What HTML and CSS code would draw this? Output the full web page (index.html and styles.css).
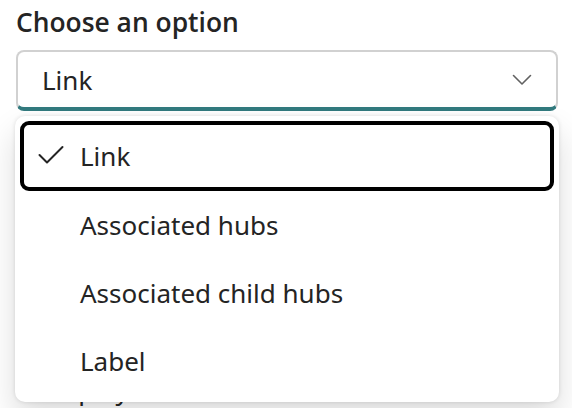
FILE: index.html
```html
<!DOCTYPE html>
<html>
<head>
<meta charset="utf-8">
<link rel="stylesheet" href="styles.css">
</head>
<body>
<div class="field">
  <label class="label">Choose an option</label>
  <div class="combo">
    <div class="dropdown">
      <span class="value">Link</span>
      <svg class="chevron" width="20" height="12" viewBox="0 0 20 12"><path d="M1.5 1.5 L10 10 L18.5 1.5" fill="none" stroke="#616161" stroke-width="1.6" stroke-linecap="round" stroke-linejoin="round"/></svg>
    </div>
    <ul class="listbox">
      <li class="option selected">
        <svg class="check" width="26" height="20" viewBox="0 0 26 20"><path d="M1.5 10 L9 17.5 L24.5 2" fill="none" stroke="#242424" stroke-width="2" stroke-linecap="round" stroke-linejoin="round"/></svg>
        <span>Link</span>
      </li>
      <li class="option"><span>Associated hubs</span></li>
      <li class="option"><span>Associated child hubs</span></li>
      <li class="option"><span>Label</span></li>
    </ul>
  </div>
  <div class="next">Display</div>
</div>
</body>
</html>
```

FILE: styles.css
```css
html, body {
  margin: 0;
  padding: 0;
  background: #ffffff;
}
body {
  font-family: "Noto Sans", "Open Sans", sans-serif;
  color: #242424;
}
.field {
  padding: 4px 14px 0 16px;
  display: flex;
  flex-direction: column;
}
.label {
  font-family: "Open Sans", "Noto Sans", sans-serif;
  font-size: 26.4px;
  font-weight: 600;
  line-height: 36px;
  height: 36px;
  margin-bottom: 10px;
}
.combo {
  position: relative;
}
.dropdown {
  box-sizing: border-box;
  height: 61px;
  border: 2px solid #d1d1d1;
  border-bottom: 4px solid #327a7e;
  border-radius: 8px;
  display: flex;
  align-items: center;
  justify-content: space-between;
  padding: 0 24px 0 24px;
  background: #fff;
}
.value {
  font-size: 26px;
  line-height: 36px;
}
.chevron {
  display: block;
}
.listbox {
  position: absolute;
  left: -1px;
  right: -1px;
  top: 66px;
  margin: 0;
  padding: 5px 5px 7px;
  list-style: none;
  background: #fff;
  border-radius: 10px;
  box-shadow: 0 0 4px rgba(0,0,0,0.12), 0 16px 32px rgba(0,0,0,0.14);
  z-index: 2;
}
.option {
  box-sizing: border-box;
  height: 68px;
  display: flex;
  align-items: center;
  padding-left: 56px;
  font-size: 26px;
  line-height: 36px;
  position: relative;
  border: 4px solid transparent;
  border-radius: 9px;
}
.option.selected {
  border-color: #000;
  height: 70px;
}
.check {
  position: absolute;
  left: 14px;
  top: 20px;
}
.next {
  font-size: 26px;
  line-height: 36px;
  margin-top: 261px;
  padding-left: 24px;
}
```
